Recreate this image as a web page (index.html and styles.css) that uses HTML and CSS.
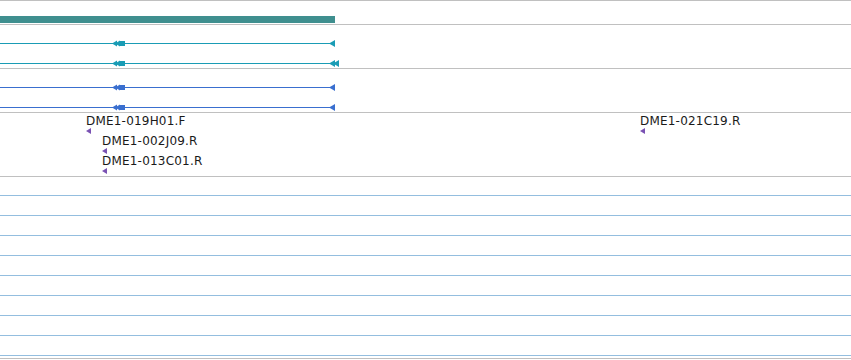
FILE: index.html
```html
<!DOCTYPE html>
<html lang="en">

<head>
    <meta charset="UTF-8">
    <meta name="viewport" content="width=device-width, initial-scale=1.0">
    <title>Track view</title>
    <link rel="stylesheet" href="styles.css">
</head>

<body>
    <div class="tracks">
        <!-- gene span -->
        <div class="track track-gene">
            <div class="genebar"></div>
        </div>

        <!-- transcripts, cyan -->
        <div class="track track-tx">
            <svg class="tx" width="851" height="43" viewBox="0 0 851 43">
                <g fill="#1a9cb5" stroke="none">
                    <rect x="0" y="18" width="334" height="1"></rect>
                    <polygon points="112,18.5 117,15.5 117,21.5"></polygon>
                    <polygon points="115,18.5 120,15.5 120,21.5"></polygon>
                    <rect x="119" y="16" width="6" height="5"></rect>
                    <polygon points="329,18.5 335,15 335,22"></polygon>

                    <rect x="0" y="38" width="334" height="1"></rect>
                    <polygon points="112,38.5 117,35.5 117,41.5"></polygon>
                    <polygon points="115,38.5 120,35.5 120,41.5"></polygon>
                    <rect x="119" y="36" width="6" height="5"></rect>
                    <polygon points="329,38.5 335,35 335,42"></polygon>
                    <polygon points="333,38.5 339,35 339,42"></polygon>
                </g>
            </svg>
        </div>

        <!-- transcripts, blue -->
        <div class="track track-tx">
            <svg class="tx" width="851" height="43" viewBox="0 0 851 43">
                <g fill="#3a6fcf" stroke="none">
                    <rect x="0" y="18" width="334" height="1"></rect>
                    <polygon points="112,18.5 117,15.5 117,21.5"></polygon>
                    <polygon points="115,18.5 120,15.5 120,21.5"></polygon>
                    <rect x="119" y="16" width="6" height="5"></rect>
                    <polygon points="329,18.5 335,15 335,22"></polygon>

                    <rect x="0" y="38" width="334" height="1"></rect>
                    <polygon points="112,38.5 117,35.5 117,41.5"></polygon>
                    <polygon points="115,38.5 120,35.5 120,41.5"></polygon>
                    <rect x="119" y="36" width="6" height="5"></rect>
                    <polygon points="329,38.5 335,35 335,42"></polygon>
                </g>
            </svg>
        </div>

        <!-- clone ends -->
        <div class="track track-clones">
            <div class="clone" style="left: 86px; top: 1px;">
                <span class="clone-name">DME1-019H01.F</span>
                <svg class="clone-arrow" width="6" height="6" viewBox="0 0 6 6"><polygon points="0,3 5,0 5,6"></polygon></svg>
            </div>
            <div class="clone" style="left: 102px; top: 21px;">
                <span class="clone-name">DME1-002J09.R</span>
                <svg class="clone-arrow" width="6" height="6" viewBox="0 0 6 6"><polygon points="0,3 5,0 5,6"></polygon></svg>
            </div>
            <div class="clone" style="left: 102px; top: 41px;">
                <span class="clone-name">DME1-013C01.R</span>
                <svg class="clone-arrow" width="6" height="6" viewBox="0 0 6 6"><polygon points="0,3 5,0 5,6"></polygon></svg>
            </div>
            <div class="clone" style="left: 640px; top: 1px;">
                <span class="clone-name">DME1-021C19.R</span>
                <svg class="clone-arrow" width="6" height="6" viewBox="0 0 6 6"><polygon points="0,3 5,0 5,6"></polygon></svg>
            </div>
        </div>

        <!-- empty rows -->
        <div class="track track-empty"></div>
        <div class="row"></div>
        <div class="row"></div>
        <div class="row"></div>
        <div class="row"></div>
        <div class="row"></div>
        <div class="row"></div>
        <div class="row"></div>
        <div class="row"></div>
        <div class="track track-end"></div>
    </div>
</body>

</html>
```

FILE: styles.css
```css
body {
    margin: 0;
    background: #ffffff;
    font-family: "DejaVu Sans", sans-serif;
    font-size: 12px;
    color: #1a1a1a;
}

.tracks {
    width: 851px;
    border-top: 1px solid #c0c0c0;
}

.track {
    position: relative;
    border-bottom: 1px solid #c0c0c0;
}

.track-gene {
    height: 23px;
    display: flex;
    align-items: flex-start;
}

.genebar {
    margin-top: 15px;
    width: 335px;
    height: 7px;
    background: #3f8f8f;
}

.track-tx {
    height: 43px;
}

.tx {
    display: block;
}

.track-clones {
    height: 63px;
}

.clone {
    position: absolute;
    display: flex;
    flex-direction: column;
    align-items: flex-start;
}

.clone-name {
    line-height: 14px;
    letter-spacing: 0.2px;
    white-space: nowrap;
}

.clone-arrow {
    display: block;
    margin-top: 0;
}

.clone-arrow polygon {
    fill: #7a52b3;
}

.track-empty {
    height: 18px;
    border-bottom: 1px solid #94bedf;
}

.row {
    height: 19px;
    border-bottom: 1px solid #94bedf;
}

.track-end {
    height: 2px;
}
```
